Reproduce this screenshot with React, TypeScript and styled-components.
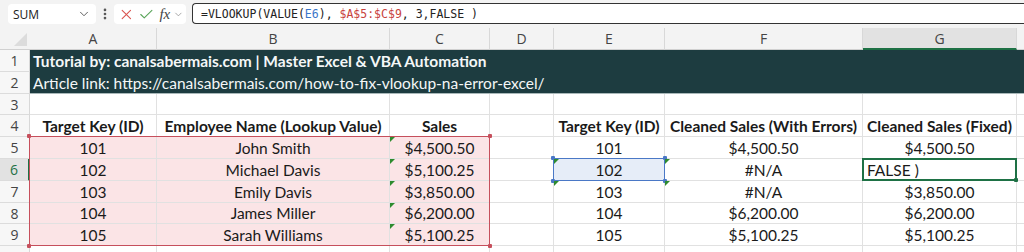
import { Fragment } from "react";
import styled, { createGlobalStyle } from "styled-components";
import { ChevronDown, EllipsisVertical, X, Check } from "lucide-react";

const GlobalStyle = createGlobalStyle`
  body {
    margin: 0;
    background: #ffffff;
    font-family: Lato, "Open Sans", sans-serif;
    overflow: hidden;
  }
`;

const cellFont = `Lato, "Noto Sans", sans-serif`;
const grid = "#e1e1e1";
const green = "#1e7145";
const columns = "30px 127px 233px 100px 64px 111px 198px 154px 1fr";
const rows = "22px 22px 22px 21px 22px 22px 22px 22px 21px 22px 10px";

const Page = styled.div`
  width: 1024px;
  height: 252px;
  overflow: hidden;
  background: #f3f3f3;
`;

const FormulaBar = styled.div`
  height: 28px;
  display: flex;
  align-items: flex-start;
  padding: 3px 0 0 8px;
  box-sizing: border-box;
`;

const NameBox = styled.div`
  width: 88px;
  height: 20px;
  margin-top: 1px;
  background: #fff;
  border-radius: 4px;
  display: flex;
  align-items: center;
  justify-content: space-between;
  padding: 0 5px;
  box-sizing: border-box;
  font-family: "Open Sans", sans-serif;
  font-size: 12px;
  color: #222;
`;

const Dots = styled.div`
  width: 18px;
  height: 22px;
  display: flex;
  align-items: center;
  justify-content: center;
  color: #555;
`;

const FxBox = styled.div`
  width: 72px;
  height: 20px;
  margin-top: 1px;
  background: #fff;
  border-radius: 4px;
  display: flex;
  align-items: center;
  padding: 0 2px 0 4px;
  box-sizing: border-box;
  gap: 3px;
`;

const Fx = styled.span`
  font-family: "Liberation Serif", serif;
  font-style: italic;
  font-size: 15px;
  color: #444;
  margin-left: 2px;
`;

const Input = styled.div`
  flex: 1;
  height: 21px;
  margin-left: 6px;
  background: #fff;
  border: 1.5px solid #333;
  border-right: none;
  border-radius: 4px 0 0 4px;
  box-sizing: border-box;
  display: flex;
  align-items: center;
  padding-left: 8px;
  font-family: "DejaVu Sans Mono", monospace;
  font-size: 11.5px;
  color: #222;
  white-space: pre;
`;

const Ref = styled.span<{ $c: string }>`
  color: ${({ $c }) => $c};
`;

const Sheet = styled.div`
  position: relative;
`;

const Cells = styled.div`
  display: grid;
  grid-template-columns: ${columns};
  grid-template-rows: ${rows};
  background: #fff;
`;

const Overlay = styled.div`
  position: absolute;
  inset: 0;
  display: grid;
  grid-template-columns: ${columns};
  grid-template-rows: ${rows};
  pointer-events: none;
`;

const Corner = styled.div`
  background: #f3f3f3;
  border-bottom: 1px solid #d0d0d0;
  position: relative;
  &::after {
    content: "";
    position: absolute;
    right: 3px;
    bottom: 3px;
    border-style: solid;
    border-width: 0 0 13px 13px;
    border-color: transparent transparent #dcdcdc transparent;
  }
`;

const ColHead = styled.div<{ $sel?: boolean }>`
  background: ${({ $sel }) => ($sel ? "#e2e2e2" : "#f3f3f3")};
  border-right: 1px solid #d8d8d8;
  border-bottom: ${({ $sel }) => ($sel ? `2px solid ${green}` : "1px solid #d0d0d0")};
  display: flex;
  align-items: center;
  justify-content: center;
  font-family: "Open Sans", sans-serif;
  font-size: 14px;
  color: #444;
  box-sizing: border-box;
`;

const RowHead = styled.div<{ $sel?: boolean }>`
  background: ${({ $sel }) => ($sel ? "#e2e2e2" : "#f7f7f7")};
  border-bottom: 1px solid #dcdcdc;
  border-right: ${({ $sel }) => ($sel ? `2px solid ${green}` : "1px solid #d8d8d8")};
  display: flex;
  align-items: center;
  justify-content: center;
  font-family: "Open Sans", sans-serif;
  font-size: 14px;
  color: ${({ $sel }) => ($sel ? green : "#444")};
  box-sizing: border-box;
`;

const Banner = styled.div<{ $bold?: boolean; $line?: boolean }>`
  grid-column: 2 / -1;
  background: #1d3c40;
  color: #f4f7f7;
  font-family: ${cellFont};
  font-size: 15.5px;
  font-weight: ${({ $bold }) => ($bold ? 700 : 400)};
  display: flex;
  align-items: center;
  padding-left: 3px;
  white-space: nowrap;
  border-bottom: ${({ $line }) => ($line ? "1px solid #a9b8b9" : "none")};
  box-sizing: border-box;
`;

const Cell = styled.div<{
  $fill?: string;
  $bold?: boolean;
  $left?: boolean;
  $flag?: boolean;
}>`
  position: relative;
  background: ${({ $fill }) => $fill || "#fff"};
  border-right: 1px solid ${grid};
  border-bottom: 1px solid ${grid};
  box-sizing: border-box;
  display: flex;
  align-items: flex-end;
  justify-content: ${({ $left }) => ($left ? "flex-start" : "center")};
  padding: 0 4px 1px;
  font-family: ${cellFont};
  font-size: 15.5px;
  font-weight: ${({ $bold }) => ($bold ? 700 : 400)};
  color: #1a1a1a;
  white-space: nowrap;
  &::before {
    content: "";
    display: ${({ $flag }) => ($flag ? "block" : "none")};
    position: absolute;
    left: 0;
    top: 0;
    border-style: solid;
    border-width: 5px 5px 0 0;
    border-color: #2e8b2e transparent transparent transparent;
  }
`;

const Range = styled.div<{ $area: string; $color: string; $w: number }>`
  grid-area: ${({ $area }) => $area};
  position: relative;
  margin: -1px 0 0 -1px;
  border: ${({ $w, $color }) => `${$w}px solid ${$color}`};
`;

const Handle = styled.span<{ $color: string; $x: "left" | "right"; $y: "top" | "bottom" }>`
  position: absolute;
  ${({ $x }) => $x}: -3px;
  ${({ $y }) => $y}: -3px;
  width: 4px;
  height: 4px;
  background: ${({ $color }) => $color};
  border-radius: 1px;
`;

const Flag = styled.div<{ $area: string }>`
  grid-area: ${({ $area }) => $area};
  position: relative;
  &::before {
    content: "";
    position: absolute;
    left: 0;
    top: 0;
    border-style: solid;
    border-width: 5px 5px 0 0;
    border-color: #2e8b2e transparent transparent transparent;
  }
`;

const cols = ["A", "B", "C", "D", "E", "F", "G"];

const left = [
  ["101", "John Smith", "$4,500.50"],
  ["102", "Michael Davis", "$5,100.25"],
  ["103", "Emily Davis", "$3,850.00"],
  ["104", "James Miller", "$6,200.00"],
  ["105", "Sarah Williams", "$5,100.25"],
];

const right = [
  ["101", "$4,500.50", "$4,500.50"],
  ["102", "#N/A", "FALSE )"],
  ["103", "#N/A", "$3,850.00"],
  ["104", "$6,200.00", "$6,200.00"],
  ["105", "$5,100.25", "$5,100.25"],
];

const pink = "#fbe4e6";
const red = "#c64f5c";
const blue = "#4a78c6";

const Corners = ({ color, all }: { color: string; all?: boolean }) => (
  <>
    {all && <Handle $color={color} $x="left" $y="top" />}
    {all && <Handle $color={color} $x="right" $y="top" />}
    {all && <Handle $color={color} $x="left" $y="bottom" />}
    <Handle $color={color} $x="right" $y="bottom" />
  </>
);

const EmptyRow = ({ n }: { n?: number }) => (
  <>
    <RowHead>{n}</RowHead>
    {Array.from({ length: 8 }).map((_, i) => (
      <Cell key={i} />
    ))}
  </>
);

export default function App() {
  return (
    <Page>
      <GlobalStyle />
      <FormulaBar>
        <NameBox>
          <span>SUM</span>
          <ChevronDown size={14} color="#555" strokeWidth={1.6} />
        </NameBox>
        <Dots>
          <EllipsisVertical size={14} strokeWidth={2.6} />
        </Dots>
        <FxBox>
          <X size={17} color="#d9534f" strokeWidth={1.6} />
          <Check size={17} color="#5aa55a" strokeWidth={1.6} />
          <Fx>fx</Fx>
          <ChevronDown size={11} color="#888" strokeWidth={1.6} />
        </FxBox>
        <Input>
          =VLOOKUP(VALUE(<Ref $c="#3a76c9">E6</Ref>), <Ref $c="#c8423c">$A$5:$C$9</Ref>, 3,FALSE )
        </Input>
      </FormulaBar>
      <Sheet>
        <Cells>
          <Corner />
          {cols.map((c) => (
            <ColHead key={c} $sel={c === "G"}>
              {c}
            </ColHead>
          ))}
          <ColHead />

          <RowHead>1</RowHead>
          <Banner $bold>Tutorial by: canalsabermais.com | Master Excel &amp; VBA Automation</Banner>
          <RowHead>2</RowHead>
          <Banner $line>Article link: https://canalsabermais.com/how-to-fix-vlookup-na-error-excel/</Banner>

          <EmptyRow n={3} />

          <RowHead>4</RowHead>
          <Cell $bold>Target Key (ID)</Cell>
          <Cell $bold>Employee Name (Lookup Value)</Cell>
          <Cell $bold>Sales</Cell>
          <Cell />
          <Cell $bold>Target Key (ID)</Cell>
          <Cell $bold>Cleaned Sales (With Errors)</Cell>
          <Cell $bold>Cleaned Sales (Fixed)</Cell>
          <Cell />

          {left.map((row, i) => (
            <Fragment key={i}>
              <RowHead $sel={i === 1}>{i + 5}</RowHead>
              <Cell $fill={pink}>{row[0]}</Cell>
              <Cell $fill={pink}>{row[1]}</Cell>
              <Cell $fill={pink} $flag>
                {row[2]}
              </Cell>
              <Cell />
              <Cell $fill={i === 1 ? "#e6edf8" : undefined}>{right[i][0]}</Cell>
              <Cell>{right[i][1]}</Cell>
              <Cell $left={i === 1}>{right[i][2]}</Cell>
              <Cell />
            </Fragment>
          ))}

          <EmptyRow />
        </Cells>

        <Overlay>
          <Range $area="6 / 2 / 11 / 5" $color={red} $w={1}>
            <Corners color={red} all />
          </Range>
          <Range $area="7 / 6 / 8 / 7" $color={blue} $w={1}>
            <Corners color={blue} all />
          </Range>
          <Range $area="7 / 8 / 8 / 9" $color={green} $w={2}>
            <Corners color={green} />
          </Range>
          <Flag $area="7 / 6 / 8 / 7" />
          <Flag $area="7 / 7 / 8 / 8" />
          <Flag $area="8 / 6 / 9 / 7" />
          <Flag $area="8 / 7 / 9 / 8" />
        </Overlay>
      </Sheet>
    </Page>
  );
}
